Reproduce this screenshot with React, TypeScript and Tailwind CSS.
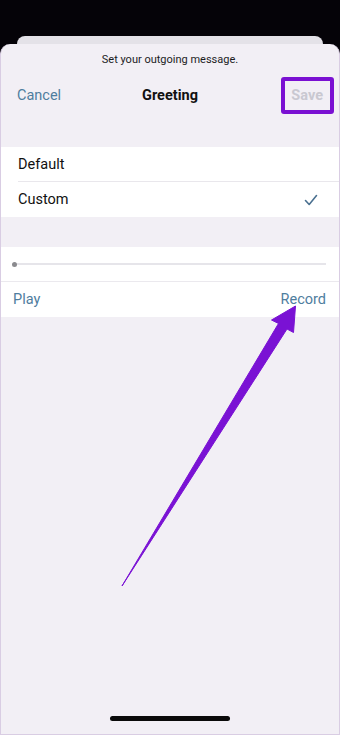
import React from 'react';

const font = { fontFamily: 'Roboto, Inter, "Liberation Sans", sans-serif' };

function Arrow() {
  // purple annotation arrow pointing at "Record"
  return (
    <svg className="absolute left-0 top-0 pointer-events-none" width="340" height="735" viewBox="0 0 340 735">
      <polygon
        points="122,586 278.5,323.5 271.5,320 295.5,306 293.5,332.5 287,329"
        fill="#7a12d4"
        stroke="#7a12d4"
        strokeWidth="1"
        strokeLinejoin="round"
      />
    </svg>
  );
}

export default function App() {
  return (
    <div className="relative w-[340px] h-[735px] overflow-hidden bg-[#050308] flex flex-col" style={font}>
      <div className="mt-[36px] mx-[17px] h-[8px] rounded-t-[10px] bg-[#e4e2e8]" />
      <div className="flex-1 flex flex-col rounded-t-[10px] bg-[#f2eff5] border-x border-b border-[#d9cde3]">
        <p className="pt-[8px] text-center text-[11px] leading-[15px] text-[#1c1c1e]">Set your outgoing message.</p>

        <div className="relative mt-[11px] h-[36px] flex items-center justify-between pl-[16px] pr-[16px]">
          <span className="text-[14.5px] text-[#4f7d9e]">Cancel</span>
          <span className="absolute inset-x-0 text-center text-[14.5px] font-bold text-[#111]">Greeting</span>
          <span className="text-[14.5px] font-bold text-[#c9c8d1]">Save</span>
        </div>

        <div className="mt-[33px] bg-white pl-[17px]">
          <div className="h-[35px] flex items-center border-b border-[#e9e7ec]">
            <span className="text-[14.5px] text-[#111] mt-[2px]">Default</span>
          </div>
          <div className="h-[35px] flex items-center justify-between pr-[21px]">
            <span className="text-[14.5px] text-[#111]">Custom</span>
            <svg width="14" height="12" viewBox="0 0 14 12">
              <path d="M1.5 6.5 L5.2 10.5 L12.5 1.5" fill="none" stroke="#4a7090" strokeWidth="1.6" strokeLinecap="round" strokeLinejoin="round" />
            </svg>
          </div>
        </div>

        <div className="mt-[30px] bg-white">
          <div className="h-[35px] flex items-center pl-[11px] pr-[13px] border-b border-[#ebe9ee]">
            <div className="w-[5px] h-[5px] rounded-full bg-[#8a8a8e]" />
            <div className="flex-1 h-[2px] bg-[#e6e5ea]" />
          </div>
          <div className="h-[35px] flex items-center justify-between pl-[12px] pr-[13px]">
            <span className="text-[14.5px] text-[#4f7d9e]">Play</span>
            <span className="text-[14.5px] text-[#4f7d9e]">Record</span>
          </div>
        </div>

        <div className="flex-1" />
        <div className="h-[18px] flex justify-center">
          <div className="w-[120px] h-[5px] rounded-full bg-[#0a0a0a]" />
        </div>
      </div>

      <div className="absolute left-[281px] top-[77px] w-[53px] h-[37px] border-[4px] border-[#7a10d2] rounded-[3px]" />
      <Arrow />
    </div>
  );
}
